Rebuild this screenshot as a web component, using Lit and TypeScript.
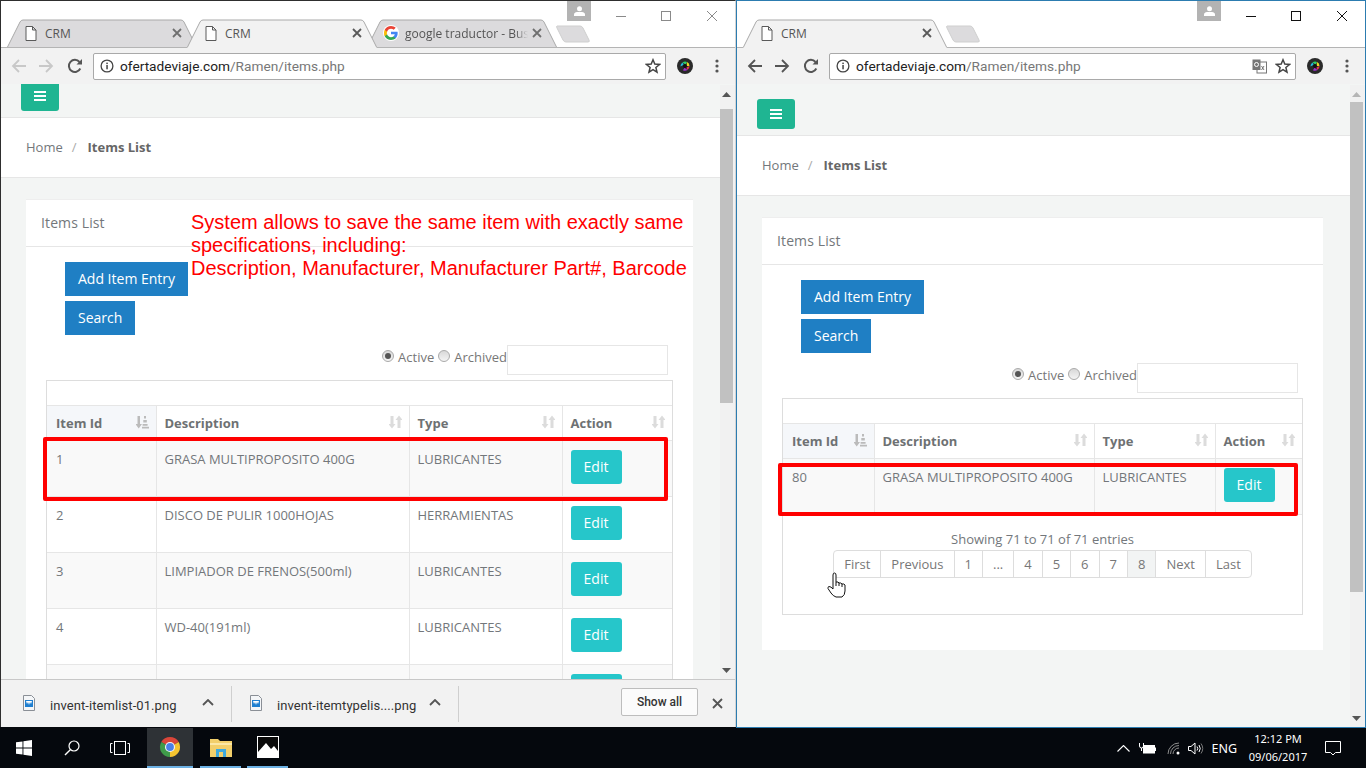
import { LitElement, html, css, svg, nothing } from 'lit';
import { customElement, property } from 'lit/decorators.js';

interface ItemRow {
  id: string;
  description: string;
  type: string;
  edit: boolean;
}

interface TabInfo {
  title: string;
  icon: 'file' | 'google';
  active: boolean;
}

const fileIcon = html`<svg width="12" height="15" viewBox="0 0 12 15"><path d="M1 .5h6.5L11 4v10.500H1z M7.500 .5V4H11" fill="#fff" stroke="#5a5a5a"/></svg>`;

const googleIcon = html`<svg width="16" height="16" viewBox="0 0 48 48">
  <circle cx="24" cy="24" r="24" fill="#fff"/>
  <path fill="#4285F4" d="M44 24.500c0-1.400-.1-2.800-.4-4H24v7.600h11.300c-.5 2.600-2 4.800-4.200 6.300v5.200h6.800C41.800 36 44 30.800 44 24.500z"/>
  <path fill="#34A853" d="M24 45c5.700 0 10.400-1.900 13.900-5.100l-6.800-5.200c-1.900 1.300-4.300 2-7.100 2-5.500 0-10.100-3.700-11.800-8.600H5.200v5.400C8.700 40.400 15.800 45 24 45z"/>
  <path fill="#FBBC05" d="M12.200 28.100c-.4-1.300-.7-2.700-.7-4.100s.3-2.800.7-4.100v-5.400h-7C3.800 17.300 3 20.600 3 24s.8 6.700 2.200 9.500z"/>
  <path fill="#EA4335" d="M24 11.300c3.100 0 5.900 1.100 8.100 3.200l6-6C34.400 5.100 29.700 3 24 3 15.800 3 8.700 7.600 5.200 14.500l7 5.400c1.700-4.900 6.300-8.600 11.800-8.600z"/>
</svg>`;

const starIcon = html`<svg width="16" height="16" viewBox="0 0 16 16"><path d="M8 1.800l1.800 4.300 4.700.4-3.600 3 1.100 4.600L8 11.700l-4 2.400 1.100-4.600-3.600-3 4.700-.4z" fill="#fff" stroke="#444" stroke-width="1.500"/></svg>`;

const infoIcon = html`<svg width="14" height="14" viewBox="0 0 14 14"><circle cx="7" cy="7" r="5.900" fill="none" stroke="#444" stroke-width="1.300"/><rect x="6.300" y="6" width="1.500" height="4.300" fill="#444"/><rect x="6.300" y="3.600" width="1.500" height="1.500" fill="#444"/></svg>`;

const cameraIcon = html`<svg width="16" height="16" viewBox="0 0 16 16">
  <circle cx="8" cy="8" r="8" fill="#2a2a2a"/>
  <path d="M3.500 8.500a4.500 4.500 0 0 1 2-4l1.300 2.300z" fill="#22b8d8"/>
  <path d="M5.500 4.500a4.500 4.500 0 0 1 4.500-.5L8.600 6.500z" fill="#2ad06a"/>
  <path d="M10 4a4.500 4.500 0 0 1 2.500 4H9.500z" fill="#e8d820"/>
  <path d="M12.500 8a4.500 4.500 0 0 1-2 4L9.300 9.600z" fill="#e83050"/>
  <path d="M10.500 12a4.500 4.500 0 0 1-4.500 .3l1.500-2.500z" fill="#a030d0"/>
  <circle cx="8" cy="8" r="2" fill="#111"/>
</svg>`;

const translateIcon = html`<svg width="15" height="15" viewBox="0 0 15 15">
  <rect x="5" y="3" width="9.500" height="11" fill="#fff" stroke="#777"/>
  <rect x=".5" y=".5" width="8" height="10.500" fill="#777"/>
  <circle cx="4.500" cy="5.500" r="2" fill="none" stroke="#fff"/>
  <path d="M9.500 7l2.500 4M12 7l-2.500 4" stroke="#777" fill="none"/>
</svg>`;

const sortBoth = html`<svg width="13" height="14" viewBox="0 0 13 14"><path d="M1.500 1h3v8h2L3 13.500-.5 9h2z" fill="#dcdcdc"/><path d="M8.500 13h3V5h2L10 .5 6.500 5h2z" fill="#dcdcdc"/></svg>`;

const sortAsc = html`<svg width="13" height="14" viewBox="0 0 13 14"><path d="M1.500 1h2.500v8h2L2.700 13.500-.5 9h2z" fill="#bbb"/><path d="M8 1h2v2.500H8zM7.300 5h3.500v2.500H7.300zM6.600 9h5v1.800h-5zM6 11.800h7v1.700H6z" fill="#bbb"/></svg>`;

const itemRows: ItemRow[] = [
  { id: '1', description: 'GRASA MULTIPROPOSITO 400G', type: 'LUBRICANTES', edit: true },
  { id: '2', description: 'DISCO DE PULIR 1000HOJAS', type: 'HERRAMIENTAS', edit: true },
  { id: '3', description: 'LIMPIADOR DE FRENOS(500ml)', type: 'LUBRICANTES', edit: true },
  { id: '4', description: 'WD-40(191ml)', type: 'LUBRICANTES', edit: true },
  { id: '', description: '', type: '', edit: true },
];

const lastRows: ItemRow[] = [
  { id: '80', description: 'GRASA MULTIPROPOSITO 400G', type: 'LUBRICANTES', edit: true },
];

const pages = ['First', 'Previous', '1', '...', '4', '5', '6', '7', '8', 'Next', 'Last'];

@customElement('crm-page')
export class CrmPage extends LitElement {
  static styles = css`
    :host {
      display: block;
      background: #f3f5f4;
      font-family: 'Open Sans', sans-serif;
      font-size: 13px;
      color: #73777b;
    }
    .nav {
      height: 52px;
      box-sizing: border-box;
      padding: 15px 0 0 20px;
      border-bottom: 1px solid #e6e6e6;
    }
    .menu {
      width: 38px;
      height: 30px;
      background: #1fb592;
      border-radius: 3px;
      display: flex;
      align-items: center;
      justify-content: center;
    }
    .crumbs {
      height: 60px;
      box-sizing: border-box;
      background: #fff;
      border-bottom: 1px solid #e6e6e6;
      padding: 0 0 2px 25px;
      display: flex;
      align-items: center;
      font-size: 13px;
    }
    .crumbs .sep { margin: 0 9px; color: #aaa; }
    .crumbs b { margin-left: 2px; color: #666; font-weight: 700; }
    .card {
      margin: 21px 27px 0 25px;
      background: #fff;
      padding-bottom: 35px;
      box-sizing: border-box;
      border-top: 1px solid #eeeeee;
    }
    .card-head {
      height: 47px;
      box-sizing: border-box;
      padding: 0 0 2px 15px;
      display: flex;
      align-items: center;
      font-size: 14px;
      letter-spacing: .12px;
      color: #73777b;
      border-bottom: 1px solid #e6e6e6;
    }
    .actions {
      padding: 15px 0 0 39px;
      display: flex;
      flex-direction: column;
      align-items: flex-start;
      gap: 5px;
    }
    .btn {
      height: 34px;
      box-sizing: border-box;
      padding: 0 13px 2px;
      background: #1f7fc4;
      color: #fff;
      font-size: 14px;
      display: flex;
      align-items: center;
    }
    .filter {
      margin: 10px 25px 0 0;
      display: flex;
      justify-content: flex-end;
      height: 30px;
      color: #777;
    }
    .opts {
      display: flex;
      align-items: center;
      height: 24px;
    }
    .radio {
      width: 10px;
      height: 10px;
      border-radius: 50%;
      border: 1px solid #aaa;
      background: linear-gradient(#d8d8d8, #f4f4f4);
      margin: -3px 4px 0 4px;
      position: relative;
    }
    .radio.on::after {
      content: '';
      position: absolute;
      left: 2px;
      top: 2px;
      width: 6px;
      height: 6px;
      border-radius: 50%;
      background: #555;
    }
    .search {
      width: 161px;
      height: 30px;
      box-sizing: border-box;
      border: 1px solid #e6e6e6;
      background: #fff;
    }
    .box {
      margin: 5px 20px 0;
      border: 1px solid #ddd;
      box-sizing: border-box;
    }
    .box-top {
      height: 24px;
      border-bottom: 1px solid #e6e6e6;
    }
    table {
      width: 100%;
      table-layout: fixed;
      border-collapse: collapse;
    }
    th, td {
      box-sizing: border-box;
      text-align: left;
      vertical-align: top;
      border-right: 1px solid #e6e6e6;
      border-bottom: 1px solid #e6e6e6;
      padding: 9px;
    }
    th:not(:first-child), td:not(:first-child) { padding-left: 8px; }
    th:last-child, td:last-child { border-right: 0; }
    th {
      height: 34px;
      font-weight: 700;
      color: #6e7173;
      position: relative;
      padding-top: 8px;
      padding-bottom: 7px;
      line-height: 18px;
    }
    th.sorted { background: #f5f7fa; }
    th svg { position: absolute; right: 7px; top: 9px; }
    td { height: 56px; line-height: 18px; color: #73777b; }
    tr:nth-child(odd) td { background: #f9f9f9; }
    .edit {
      width: 51px;
      height: 34px;
      background: #26c6ca;
      color: #fff;
      border-radius: 3px;
      font-size: 14px;
      display: flex;
      align-items: center;
      justify-content: center;
    }
    .info { margin-top: 15px; text-align: center; line-height: 18px; }
    .pager {
      margin: 2px auto 0;
      display: flex;
      width: max-content;
      border: 1px solid #ddd;
      border-radius: 4px;
      height: 28px;
      box-sizing: border-box;
    }
    .pager span {
      padding: 0 10px;
      border-right: 1px solid #ddd;
      display: flex;
      align-items: center;
      color: #777;
    }
    .pager span:last-child { border-right: 0; }
    .pager span.current { background: #f2f4f4; }
    .box-foot { height: 36px; }
  `;

  @property({ type: Array }) rows: ItemRow[] = [];
  @property({ type: Array }) cols: number[] = [];
  @property({ type: Boolean }) footer = false;

  render() {
    return html`
      <div class="nav">
        <div class="menu">
          <svg width="12" height="10" viewBox="0 0 12 10"><path d="M0 0h12v2H0zM0 4h12v2H0zM0 8h12v2H0z" fill="#fff"/></svg>
        </div>
      </div>
      <div class="crumbs">Home<span class="sep">/</span><b>Items List</b></div>
      <div class="card">
        <div class="card-head">Items List</div>
        <div class="actions">
          <div class="btn">Add Item Entry</div>
          <div class="btn">Search</div>
        </div>
        <div class="filter">
          <div class="opts"><span class="radio on"></span>Active<span class="radio"></span>Archived</div>
          <div class="search"></div>
        </div>
        <div class="box">
          <div class="box-top"></div>
          <table>
            <colgroup>${this.cols.map(w => html`<col style="width:${w}px">`)}</colgroup>
            <thead>
              <tr>
                <th class="sorted">Item Id${sortAsc}</th>
                <th>Description${sortBoth}</th>
                <th>Type${sortBoth}</th>
                <th>Action${sortBoth}</th>
              </tr>
            </thead>
            <tbody>
              ${this.rows.map(row => html`
                <tr>
                  <td>${row.id}</td>
                  <td>${row.description}</td>
                  <td>${row.type}</td>
                  <td><div class="edit">Edit</div></td>
                </tr>
              `)}
            </tbody>
          </table>
          ${this.footer ? html`
            <div class="info">Showing 71 to 71 of 71 entries</div>
            <div class="pager">
              ${pages.map(p => html`<span class="${p === '8' ? 'current' : ''}">${p}</span>`)}
            </div>
            <div class="box-foot"></div>
          ` : nothing}
        </div>
      </div>
    `;
  }
}

@customElement('browser-window')
export class BrowserWindow extends LitElement {
  static styles = css`
    :host {
      display: flex;
      flex-direction: column;
      height: 727px;
      box-sizing: border-box;
      background: #fff;
      overflow: hidden;
      font-family: 'Roboto', 'Noto Sans', sans-serif;
      border-top: 1px solid #2e2e2e;
      border-left: 1px solid #2e2e2e;
      border-right: 1px solid #d4d4d4;
    }
    :host([focused]) {
      height: 728px;
      border: 1px solid #2c7cb0;
    }
    .title {
      height: 46px;
      flex: none;
      box-sizing: border-box;
      display: flex;
      align-items: flex-end;
      padding-left: 6px;
      position: relative;
      z-index: 2;
    }
    .tab {
      position: relative;
      height: 28px;
      margin-right: -10px;
      flex: none;
      display: flex;
      align-items: center;
      font-size: 13px;
      color: #555;
    }
    .tab.active { z-index: 1; }
    .tab svg.shape { position: absolute; left: 0; top: 0; }
    .tab .ico { position: relative; margin-left: 16px; width: 16px; display: flex; justify-content: center; }
    .tab .name {
      position: relative;
      margin-left: 6px;
      flex: 1;
      overflow: hidden;
      white-space: nowrap;
      font-family: 'Open Sans', sans-serif;
      font-size: 12px;
    }
    .tab .name.fade {
      -webkit-mask-image: linear-gradient(90deg, #000 90%, transparent);
      mask-image: linear-gradient(90deg, #000 90%, transparent);
    }
    .tab .close { position: relative; margin: 0 15px 0 4px; display: flex; }
    .newtab { margin: 0 0 4px 9px; display: flex; }
    .profile {
      position: absolute;
      top: 0;
      left: var(--profile-left, 566px);
      width: 24px;
      height: 20px;
      background: #b3b3b3;
      display: flex;
      justify-content: center;
      align-items: center;
    }
    .controls {
      position: absolute;
      top: 9px;
      right: 0;
      display: flex;
      height: 12px;
      align-items: center;
    }
    .controls svg { margin-right: 35px; }
    .controls svg:nth-child(2) { margin-right: 36px; }
    .controls svg:last-child { margin-right: 18px; }
    .toolbar {
      height: 38px;
      flex: none;
      box-sizing: border-box;
      background: #f2f2f2;
      border-top: 1px solid #b4b4b4;
      border-bottom: 1px solid #b4b4b4;
      display: flex;
      align-items: center;
    }
    .toolbar .nav { width: 92px; flex: none; display: flex; padding-left: 10px; box-sizing: border-box; gap: 11px; }
    .address {
      flex: 1;
      height: 27px;
      box-sizing: border-box;
      background: #fff;
      border: 1px solid #a9a9a9;
      border-radius: 2px;
      display: flex;
      align-items: center;
      padding: 0 4px 0 6px;
      font-family: 'Roboto', sans-serif;
      font-size: 13.700px;
      color: #222;
    }
    .address .url { margin-left: 6px; flex: 1; white-space: nowrap; }
    .address .url span { color: #777; }
    .address .tr { margin-right: 8px; display: flex; }
    .address .st { display: flex; }
    .ext { width: 69px; flex: none; display: flex; align-items: center; box-sizing: border-box; padding-left: 11px; }
    .ext .dots { margin-left: 22px; display: flex; }
    .view {
      flex: 1;
      min-height: 0;
      display: flex;
      margin-top: -1px;
      background: #f3f5f4;
    }
    .port { flex: 1; min-width: 0; overflow: hidden; }
    .scroll {
      width: 15px;
      flex: none;
      background: #f1f1f1;
      display: flex;
      flex-direction: column;
      align-items: flex-start;
      margin-top: 1px;
    }
    .arrow { width: 13px; height: 18px; display: flex; align-items: center; justify-content: center; flex: none; }
    .thumb { width: 13px; background: #c1c1c1; height: var(--thumb, 294px); flex: none; margin-top: var(--thumb-top, 6px); }
    .fill { flex: 1; }
    .downloads {
      height: 48px;
      flex: none;
      box-sizing: border-box;
      background: #f2f2f2;
      border-top: 1px solid #c8c8c8;
      display: flex;
      align-items: center;
      font-family: 'Roboto', sans-serif;
      font-size: 13px;
      color: #333;
    }
    .dl {
      height: 36px;
      display: flex;
      align-items: center;
      box-sizing: border-box;
      border-right: 1px solid #cfcfcf;
    }
    .dl .doc { margin-left: 22px; display: flex; margin-top: -2px; }
    .dl .name { margin-left: 15px; margin-top: 4px; white-space: nowrap; letter-spacing: .08px; }
    .dl .chev { margin-left: 10px; margin-right: 17px; display: flex; margin-top: -3px; }
    .dl.second .doc { margin-left: 18px; }
    .stretch { flex: 1; }
    .show {
      margin-left: auto;
      margin-top: -4px;
      width: 77px;
      height: 28px;
      box-sizing: border-box;
      border: 1px solid #bdbdbd;
      background: #fbfbfb;
      border-radius: 2px;
      display: flex;
      align-items: center;
      justify-content: center;
      font-size: 12px;
      font-weight: 500;
      color: #333;
    }
    .dlclose { margin: 0 12px 0 14px; display: flex; }
  `;

  @property({ type: Array }) tabs: TabInfo[] = [];
  @property({ type: Number }) tabWidth = 190;
  @property({ type: Boolean, reflect: true }) focused = false;
  @property({ type: Boolean }) translate = false;
  @property({ type: Boolean }) downloads = false;

  private tabShape(active: boolean) {
    const w = this.tabWidth;
    const fill = active ? '#f2f2f2' : '#dcdbdd';
    const edge = `M0.500 28 L13 3 Q14 1 16 1 H${w - 16} Q${w - 14} 1 ${w - 13} 3 L${w - 0.5} 28`;
    const body = `${edge} V29 H0.500 Z`;
    return svg`<svg class="shape" width="${w}" height="29" viewBox="0 0 ${w} 29"><path d="${active ? body : edge}" fill="${fill}"/><path d="${edge}" fill="none" stroke="#a9a9a9"/></svg>`;
  }

  private renderTab(tab: TabInfo) {
    const colour = tab.active ? '#5a5a5a' : '#6f6f6f';
    return html`
      <div class="tab ${tab.active ? 'active' : ''}" style="width:${this.tabWidth}px">
        ${this.tabShape(tab.active)}
        <span class="ico">${tab.icon === 'file' ? fileIcon : googleIcon}</span>
        <span class="name ${tab.icon === 'google' ? 'fade' : ''}">${tab.title}</span>
        <span class="close"><svg width="10" height="10" viewBox="0 0 10 10"><path d="M1 1l8 8M9 1L1 9" stroke="${colour}" stroke-width="1.800"/></svg></span>
      </div>
    `;
  }

  render() {
    const nav = this.focused ? '#555' : '#c8c8c8';
    const ctl = this.focused ? '#111' : '#8a8a8a';
    return html`
      <div class="title">
        ${this.tabs.map(t => this.renderTab(t))}
        <span class="newtab"><svg width="34" height="18" viewBox="0 0 34 18"><path d="M1 1h23q2 0 3 2l6 12q1 2-1 2H10q-2 0-3-2L1 3q-1-2 0-2z" fill="#dcdbdd" stroke="#cfcfcf"/></svg></span>
        <div class="profile"><svg width="11" height="10" viewBox="0 0 11 10"><circle cx="5.500" cy="2.800" r="2.500" fill="#fff"/><path d="M0 10V8.500Q0 6.500 3 6h5q3 .5 3 2.500V10z" fill="#fff"/></svg></div>
        <div class="controls">
          <svg width="10" height="10" viewBox="0 0 10 10"><path d="M0 5.500h10" stroke="${ctl}"/></svg>
          <svg width="10" height="10" viewBox="0 0 10 10"><rect x=".5" y=".5" width="9" height="9" fill="none" stroke="${ctl}"/></svg>
          <svg width="10" height="10" viewBox="0 0 10 10"><path d="M0 0l10 10M10 0L0 10" stroke="${ctl}"/></svg>
        </div>
      </div>
      <div class="toolbar">
        <div class="nav">
          <svg width="16" height="16" viewBox="0 0 16 16"><path d="M15 8H2M8 2L2 8l6 6" fill="none" stroke="${nav}" stroke-width="1.800"/></svg>
          <svg width="16" height="16" viewBox="0 0 16 16"><path d="M1 8h13M8 2l6 6-6 6" fill="none" stroke="${nav}" stroke-width="1.800"/></svg>
          <svg style="margin-left:2px" width="16" height="16" viewBox="0 0 16 16"><path d="M13.300 10.500A6 6 0 1 1 12.500 4" fill="none" stroke="#555" stroke-width="2"/><path d="M9.500 6.500H15V1z" fill="#555"/></svg>
        </div>
        <div class="address">
          ${infoIcon}
          <div class="url">ofertadeviaje.com<span>/Ramen/items.php</span></div>
          ${this.translate ? html`<span class="tr">${translateIcon}</span>` : nothing}
          <span class="st">${starIcon}</span>
        </div>
        <div class="ext">
          ${cameraIcon}
          <span class="dots"><svg width="4" height="14" viewBox="0 0 4 14"><circle cx="2" cy="2" r="1.600" fill="#555"/><circle cx="2" cy="7" r="1.600" fill="#555"/><circle cx="2" cy="12" r="1.600" fill="#555"/></svg></span>
        </div>
      </div>
      <div class="view">
        <div class="port"><slot></slot></div>
        <div class="scroll">
          <span class="arrow"><svg width="9" height="5" viewBox="0 0 9 5"><path d="M0 5l4.500-5L9 5z" fill="${this.focused ? '#b5b5b5' : '#555'}"/></svg></span>
          <div class="thumb"></div>
          <div class="fill"></div>
          <span class="arrow"><svg width="9" height="5" viewBox="0 0 9 5"><path d="M0 0l4.500 5L9 0z" fill="#555"/></svg></span>
        </div>
      </div>
      ${this.downloads ? this.renderDownloads() : nothing}
    `;
  }

  private renderDownloads() {
    const doc = html`<svg width="12" height="16" viewBox="0 0 12 16"><path d="M.5.500h8l3 3v12H.5z" fill="#f4f6f8" stroke="#8a8f96"/><rect x="2" y="5" width="8" height="7" fill="#1f7fd0"/><path d="M3 6l1 3 1-2 1 3 1-3 1 2 1-3z" fill="#fff"/></svg>`;
    const chev = html`<svg width="12" height="7" viewBox="0 0 12 7"><path d="M1 6l5-5 5 5" fill="none" stroke="#555" stroke-width="1.800"/></svg>`;
    return html`
      <div class="downloads">
        <div class="dl first" style="width:231px"><span class="doc">${doc}</span><span class="name">invent-itemlist-01.png</span><span class="stretch"></span><span class="chev">${chev}</span></div>
        <div class="dl second" style="width:227px"><span class="doc">${doc}</span><span class="name">invent-itemtypelis....png</span><span class="stretch"></span><span class="chev">${chev}</span></div>
        <div class="show">Show all</div>
        <span class="dlclose"><svg width="11" height="11" viewBox="0 0 11 11"><path d="M1 1l9 9M10 1l-9 9" stroke="#555" stroke-width="1.800"/></svg></span>
      </div>
    `;
  }
}

@customElement('app-root')
export class AppRoot extends LitElement {
  static styles = css`
    :host {
      display: block;
      position: relative;
      width: 1366px;
      height: 768px;
      overflow: hidden;
      background: #05080d;
    }
    .desktop {
      display: grid;
      grid-template-columns: 736px 630px;
      grid-template-rows: 728px 40px;
    }
    .left-page { margin-top: -18px; }
    .left-win { --thumb: 294px; --thumb-top: 6px; --profile-left: 566px; }
    .right-win { --thumb: 490px; --thumb-top: -1px; --profile-left: 460px; }
    .taskbar {
      grid-column: 1 / 3;
      background: #05080d;
      display: flex;
      align-items: center;
      color: #fff;
      font-family: 'Noto Sans', 'Open Sans', sans-serif;
      font-size: 12px;
    }
    .task { width: 48px; height: 40px; display: flex; align-items: center; justify-content: center; flex: none; }
    .task.view { margin-right: 3px; }
    .task.app { box-sizing: border-box; border-bottom: 2px solid #6cb1e4; margin: 0 3px; width: 41px; }
    .task.app.open { width: 46px; margin: 0 4px 0 0; background: #2e3236; }
    .spacer { flex: 1; }
    .tray { display: flex; align-items: center; flex: none; }
    .tray .gap-l { margin-left: 11px; }
    .tray .gap-m { margin-left: 9px; }
    .tray .gap-s { margin-left: 8px; }
    .eng { margin-left: 7px; font-size: 12.500px; }
    .clock { width: 80px; margin-left: 1px; text-align: center; font-size: 11px; line-height: 18px; }
    .notice { width: 30px; margin-right: 18px; display: flex; justify-content: center; }
    .mark {
      position: absolute;
      border: 4px solid #f00;
      border-radius: 2px;
      box-sizing: border-box;
    }
    .mark.one { left: 43px; top: 437px; width: 625px; height: 64px; }
    .mark.two { left: 778px; top: 463px; width: 520px; height: 53px; }
    .note {
      position: absolute;
      left: 191px;
      top: 211px;
      width: 510px;
      color: #f00;
      font-family: 'Liberation Sans', Arial, sans-serif;
      font-size: 20px;
      line-height: 23px;
    }
    .hand { position: absolute; left: 827px; top: 572px; display: flex; }
  `;

  render() {
    return html`
      <div class="desktop">
        <browser-window
          class="left-win"
          .tabs=${[
            { title: 'CRM', icon: 'file', active: false },
            { title: 'CRM', icon: 'file', active: true },
            { title: 'google traductor - Bus', icon: 'google', active: false },
          ]}
          .tabWidth=${190}
          downloads
        >
          <crm-page class="left-page" .rows=${itemRows} .cols=${[109, 253, 153, 110]}></crm-page>
        </browser-window>
        <browser-window
          class="right-win"
          .tabs=${[{ title: 'CRM', icon: 'file', active: true }]}
          .tabWidth=${204}
          focused
          translate
        >
          <crm-page .rows=${lastRows} .cols=${[91, 220, 121, 87]} footer></crm-page>
        </browser-window>
        <div class="taskbar">
          <div class="task">
            <svg width="16" height="16" viewBox="0 0 16 16"><path d="M0 2.300l6.500-.9v6.200H0zM7.400 1.300L16 0v7.600H7.400zM0 8.400h6.500v6.200L0 13.700zM7.400 8.400H16V16l-8.600-1.200z" fill="#fff"/></svg>
          </div>
          <div class="task">
            <svg width="16" height="16" viewBox="0 0 16 16"><circle cx="10" cy="6" r="5" fill="none" stroke="#fff" stroke-width="1.200"/><path d="M6.300 9.700L1 15" stroke="#fff" stroke-width="1.400"/></svg>
          </div>
          <div class="task view">
            <svg width="20" height="14" viewBox="0 0 20 14"><rect x="4.500" y=".5" width="11" height="13" fill="none" stroke="#fff"/><path d="M2.500 2.500H.5v9h2M17.500 2.500h2v9h-2" fill="none" stroke="#fff"/></svg>
          </div>
          <div class="task app open">
            <svg width="22" height="22" viewBox="0 0 48 48">
              <path d="M24 24L4.950 13A22 22 0 0 1 43.050 13z" fill="#d9463a"/>
              <path d="M24 24L43.050 13A22 22 0 0 1 24 46z" fill="#f4c430"/>
              <path d="M24 24L24 46A22 22 0 0 1 4.950 13z" fill="#3f9b4a"/>
              <circle cx="24" cy="24" r="11" fill="#f4f4f4"/>
              <circle cx="24" cy="24" r="8.500" fill="#4a80e8"/>
            </svg>
          </div>
          <div class="task app">
            <svg width="22" height="19" viewBox="0 0 22 19"><path d="M0 1h8l2 2h12v16H0z" fill="#f2cf6b"/><path d="M0 5h22v2H0z" fill="#fbe7a6"/><path d="M6 11h10v8H6z" fill="#3fa9dc"/><path d="M9 14h4v5H9z" fill="#f2cf6b"/></svg>
          </div>
          <div class="task app">
            <svg width="22" height="22" viewBox="0 0 22 22"><rect width="22" height="22" fill="#fff"/><rect x="1" y="1" width="20" height="20" fill="#0a0a0a"/><path d="M1 21v-5l8-9 5 6 3-3 4 5v6z" fill="#fff"/></svg>
          </div>
          <div class="spacer"></div>
          <div class="tray">
            <svg width="13" height="7" viewBox="0 0 13 7"><path d="M.5 6.500l6-6 6 6" fill="none" stroke="#fff" stroke-width="1.100"/></svg>
            <svg class="gap-m" width="17" height="11" viewBox="0 0 17 11"><path d="M.5 0v3a2 2 0 0 0 4 0V0M2.500 5v3" fill="none" stroke="#fff"/><rect x="4.500" y="2.500" width="11" height="7.500" fill="#fff" stroke="#fff"/><rect x="16" y="4.500" width="1" height="3.500" fill="#fff"/></svg>
            <svg class="gap-l" width="13" height="13" viewBox="0 0 13 13"><path d="M1 12a11 11 0 0 1 11-11M3.500 12A8.500 8.500 0 0 1 12 3.500M6 12a6 6 0 0 1 6-6" fill="none" stroke="#8d8d8d"/><circle cx="11" cy="11" r="1.500" fill="#fff"/></svg>
            <svg class="gap-s" width="16" height="13" viewBox="0 0 16 13"><path d="M.5 4.500h2.500l4-3.500v11l-4-3.500H.5z" fill="none" stroke="#fff"/><path d="M9 4.500q1.500 2 0 4M11 3q2.500 3.500 0 7" fill="none" stroke="#fff"/><path d="M13 1.500q3.500 5 0 10" fill="none" stroke="#777"/></svg>
            <span class="eng">ENG</span>
            <div class="clock">12:12 PM<br>09/06/2017</div>
            <div class="notice"><svg width="16" height="15" viewBox="0 0 16 15"><path d="M.5.500h15v11h-5l-2.500 2.500-2.500-2.500h-5z" fill="none" stroke="#fff"/></svg></div>
          </div>
        </div>
      </div>
      <div class="mark one"></div>
      <div class="mark two"></div>
      <div class="note">System allows to save the same item with exactly same specifications, including:<br>Description, Manufacturer, Manufacturer Part#, Barcode</div>
      <div class="hand">
        <svg width="20" height="26" viewBox="0 0 20 26"><path d="M6 13V3Q6 1 7.500 1T9 3V10Q11.500 9.500 12 11 14 10.500 15 12 17 11.500 18 13V19Q18 23 15 25H9Q6 24 4 21L1 16.500Q.5 15 2 14.500 4 14.500 6 17z" fill="#fff" stroke="#111" stroke-linejoin="round"/><path d="M9 10v4M12 11v3M15 12v3" stroke="#111" fill="none"/></svg>
      </div>
    `;
  }
}
